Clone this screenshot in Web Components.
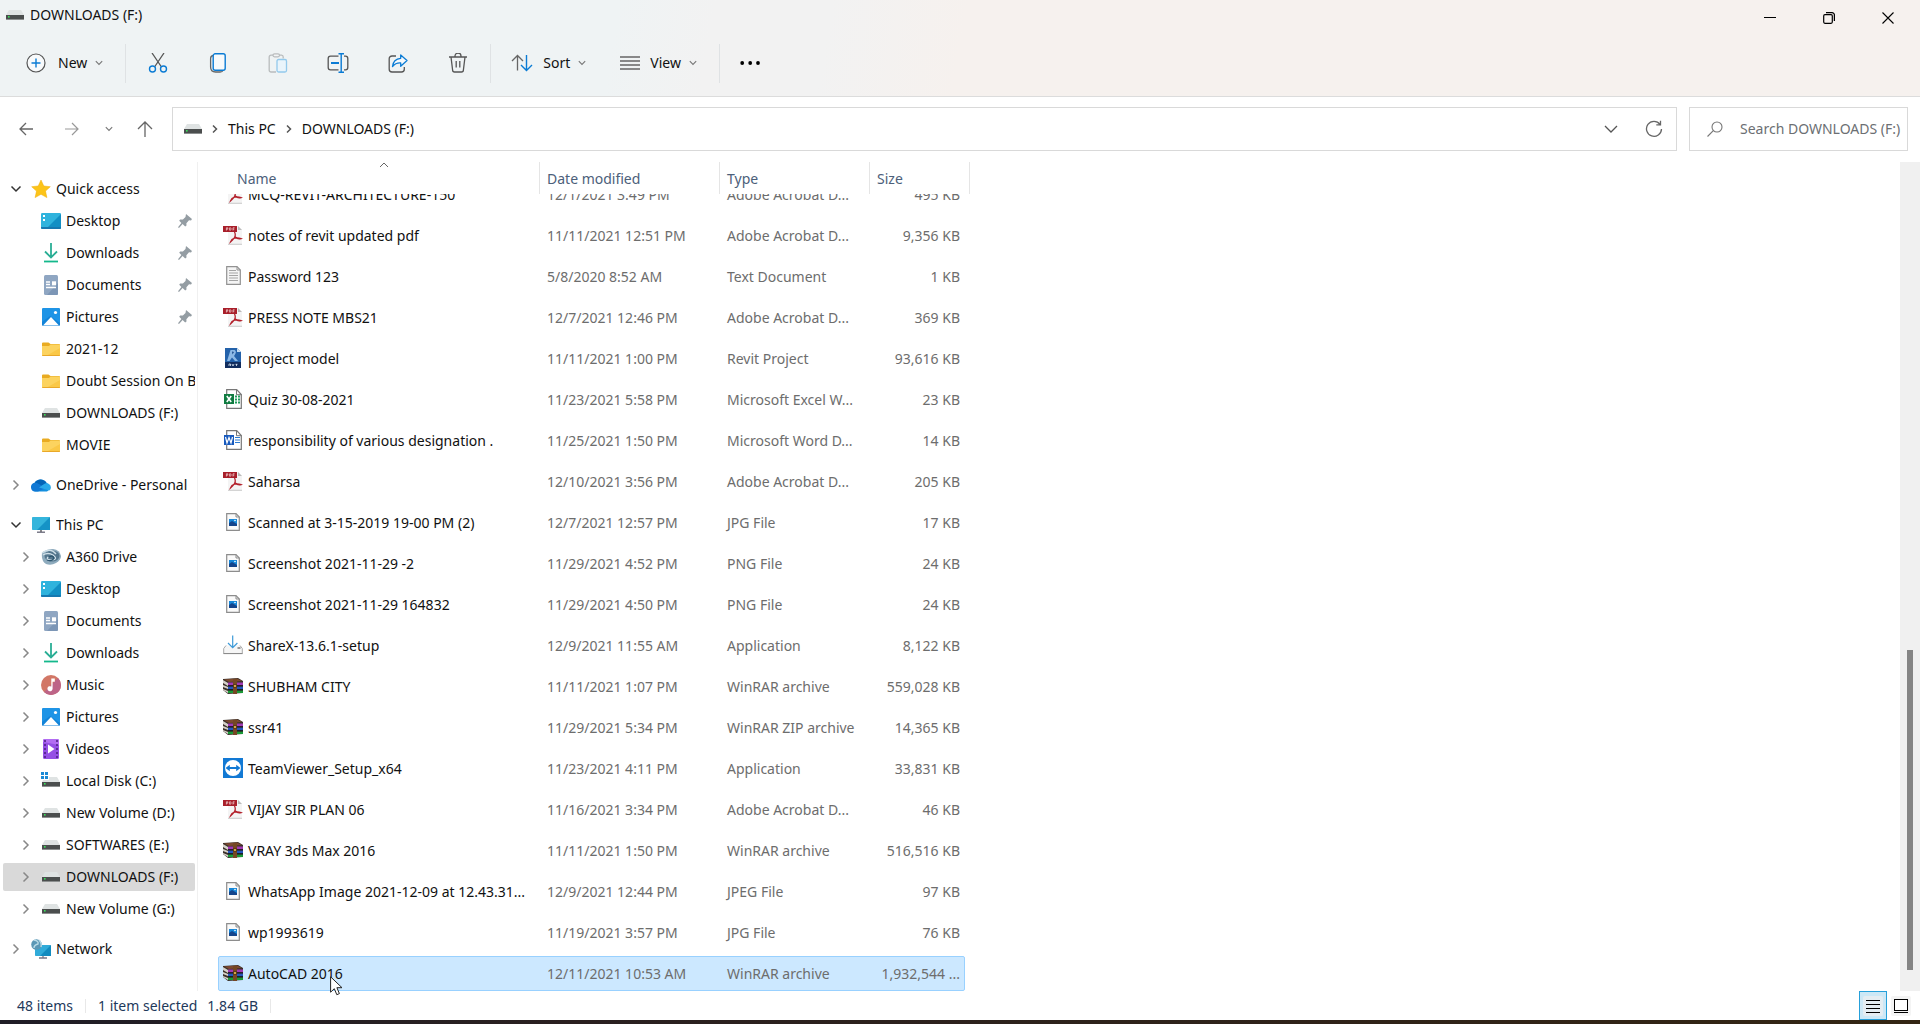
<!DOCTYPE html>
<html lang="en">
<head>
<meta charset="utf-8">
<title>DOWNLOADS (F:)</title>
<style>
html, body { margin: 0; height: 100%; }
body { font: 14px/20px "Noto Sans", "Open Sans", sans-serif; color: #111; background: #fff; overflow: hidden; }
</style>
</head>
<body>
<file-explorer></file-explorer>

<script>
const ICONS = {
  drive: [18, 10, '<path d="M3 0h12l3 5H0z" fill="#dfe3e3"/><rect y="5" width="18" height="5" fill="#4b4e4e"/><rect y="9" width="18" height="1" fill="#8c8f8f"/><rect x="2" y="6" width="1.6" height="1.6" fill="#3be05a"/>'],
  cdrive: [20, 18, '<path d="M0 0h3v3H0zM4 0h3v3H4zM0 4h3v3H0zM4 4h3v3H4z" fill="#1a8ad6"/><path d="M8 5h8l3 5H1l1-2h6z" fill="#dfe3e3"/><rect x="1" y="10" width="18" height="5" fill="#4b4e4e"/><rect x="1" y="14" width="18" height="1" fill="#8c8f8f"/><rect x="3" y="11" width="1.6" height="1.6" fill="#3be05a"/>'],
  add: [20, 20, '<circle cx="10" cy="10" r="9" fill="#f8fafb" stroke="#555" stroke-width="1.2"/><path d="M10 5.500v9M5.500 10h9" stroke="#0a7bd4" stroke-width="1.4"/>'],
  down: [8, 6, '<path d="M.8 1.200 4 4.400l3.200-3.200" fill="none" stroke="#777" stroke-width="1.100"/>'],
  downbig: [14, 8, '<path d="M1 1l6 6 6-6" fill="none" stroke="#555" stroke-width="1.300"/>'],
  cut: [20, 20, '<path d="M4 0l9.500 14M16 0L6.500 14" stroke="#555" stroke-width="1.300" fill="none"/><circle cx="4.500" cy="16" r="3" fill="none" stroke="#0a7bd4" stroke-width="1.400"/><circle cx="15.500" cy="16" r="3" fill="none" stroke="#0a7bd4" stroke-width="1.400"/>'],
  copy: [18, 20, '<path d="M4 2.500C2 3 1.600 4 1.600 5.500V14c0 3.500 1.400 5 5 5h4.500c1.500 0 2.500-.5 2.900-1.600" fill="none" stroke="#666" stroke-width="1.300"/><rect x="4.200" y=".8" width="12" height="16.400" rx="2" fill="#f8fafb" stroke="#0a7bd4" stroke-width="1.400"/>'],
  paste: [20, 20, '<path d="M8 19H3a1.800 1.800 0 0 1-1.800-1.800V4A1.800 1.800 0 0 1 3 2.200h10.500A1.800 1.800 0 0 1 15.200 4v1.500" fill="none" stroke="#b9bcbd" stroke-width="1.300"/><rect x="5" y=".8" width="6.500" height="3" rx="1.500" fill="#f2f4f5" stroke="#b9bcbd" stroke-width="1.200"/><rect x="9" y="6.500" width="9.500" height="12.500" rx="1.500" fill="#e9f4fb" stroke="#93c9ec" stroke-width="1.300"/>'],
  rename: [22, 20, '<path d="M11.500 3.200H3.500A2.300 2.300 0 0 0 1.200 5.500v9a2.300 2.300 0 0 0 2.300 2.300h8M17 3.200h1.500a2.300 2.300 0 0 1 2.300 2.300v9a2.300 2.300 0 0 1-2.300 2.300H17" fill="none" stroke="#555" stroke-width="1.300"/><path d="M4 10h8" stroke="#0a7bd4" stroke-width="2"/><path d="M14.200.700v18.600M11.500.8h5.500M11.500 19.200h5.500" stroke="#0a7bd4" stroke-width="1.400"/>'],
  share: [20, 20, '<path d="M8 3H4a2.800 2.800 0 0 0-2.800 2.800v10.400A2.800 2.800 0 0 0 4 19h9.500a2.800 2.800 0 0 0 2.800-2.800V14" fill="none" stroke="#555" stroke-width="1.300"/><path d="M12.700 2l6.300 5.600-6.300 5.600v-3.300c-3.500-.2-6 .8-8.200 3.600.5-4.800 3.200-7.800 8.200-8.200z" fill="#f5f9fc" stroke="#0a7bd4" stroke-width="1.300" stroke-linejoin="round"/>'],
  trash: [20, 20, '<path d="M1 4h18M7 4V3a3 3 0 0 1 6 0v1M3 4l1.600 13A2 2 0 0 0 6.600 19h6.800a2 2 0 0 0 2-2L17 4M8.200 8v6.500M11.800 8v6.500" fill="none" stroke="#555" stroke-width="1.300"/>'],
  sort: [22, 18, '<path d="M6.500 16.500V2M1 7l5.500-5.500L12 7" fill="none" stroke="#666" stroke-width="1.300"/><path d="M15.500 1v15M10 11l5.500 5.500L21 11" fill="none" stroke="#0a7bd4" stroke-width="1.400"/>'],
  view: [20, 14, '<path d="M0 1h20M0 5h20M0 9h20M0 13h20" stroke="#666" stroke-width="1.400"/>'],
  more: [20, 4, '<circle cx="2.200" cy="2" r="1.900"/><circle cx="10.200" cy="2" r="1.900"/><circle cx="18" cy="2" r="1.900"/>'],
  min: [12, 12, '<path d="M0 5.500h12" stroke="#000"/>'],
  restore: [12, 12, '<rect x=".7" y="2.700" width="8.600" height="8.600" rx="1.200" fill="none" stroke="#000" stroke-width="1.200"/><path d="M3 .7h6a2.400 2.400 0 0 1 2.400 2.400V9" fill="none" stroke="#000" stroke-width="1.300"/>'],
  close: [12, 12, '<path d="M.5.500l11 11M11.500.500l-11 11" stroke="#000" stroke-width="1.100"/>'],
  back: [14, 14, '<path d="M14 7H1M7 1L1 7l6 6" fill="none" stroke="#666" stroke-width="1.300"/>'],
  forward: [14, 14, '<path d="M0 7h13M7 1l6 6-6 6" fill="none" stroke="#999" stroke-width="1.200"/>'],
  up: [16, 16, '<path d="M8 16V1M1 8l7-7 7 7" fill="none" stroke="#666" stroke-width="1.300"/>'],
  crumb: [6, 10, '<path d="M1 1.500L4.500 5 1 8.500" fill="none" stroke="#555" stroke-width="1.500"/>'],
  refresh: [18, 18, '<path d="M15 4.300A7.500 7.500 0 1 0 16.500 9M15.500.8v4h-4.200" fill="none" stroke="#666" stroke-width="1.300"/>'],
  search: [16, 16, '<circle cx="10" cy="6" r="5" fill="none" stroke="#777" stroke-width="1.100"/><path d="M6.300 9.700L.5 15.500" stroke="#777" stroke-width="1.100"/>'],
  open: [12, 8, '<path d="M1.500 1.500L6 6l4.500-4.500" fill="none" stroke="#333" stroke-width="1.500"/>'],
  closed: [8, 12, '<path d="M1.500 1.500L6 6l-4.500 4.500" fill="none" stroke="#888" stroke-width="1.500"/>'],
  caret: [10, 6, '<path d="M1 5l4-4 4 4" fill="none" stroke="#666"/>'],
  pin: [14, 14, '<path d="M8 0l6 5-1 1.500-2-.3-2.600 3 .1 2.300-1.300.9-2.600-2.400L1 14l-1-.7 3.400-4.200L1.200 6.700l.9-1.100 2.800 0L7.500 3z" fill="#949da3"/>'],
  star: [20, 20, '<path d="M10 1l2.800 6 6.500.7-4.800 4.400 1.400 6.500-5.900-3.300-5.900 3.300 1.400-6.500L.7 7.700 7.200 7z" fill="#fcc419" stroke="#f0ad05" stroke-width=".5"/>'],
  desktop: [20, 16, '<rect width="20" height="16" rx="1.200" fill="#2fb3dd"/><path d="M20 1v13.800L18.800 16H5z" fill="#128fc4"/><path d="M2 2h2v2H2zM2 6h2v2H2z" fill="#fff"/><path d="M0 14h20v.8a1.200 1.200 0 0 1-1.200 1.200H1.200A1.200 1.200 0 0 1 0 14.800z" fill="#1678b0"/>'],
  download: [16, 20, '<path d="M8 0v14M2 8.500l6 6 6-6" fill="none" stroke="#2aae95" stroke-width="1.800"/><path d="M1 18.500h14" stroke="#14b88c" stroke-width="1.800"/>'],
  document: [14, 20, '<rect width="14" height="20" rx="1.500" fill="#8fa6c2"/><path d="M14 8v10.500a1.500 1.500 0 0 1-1.500 1.500H3z" fill="#7c96b6"/><path d="M2 7h4M2 9.500h4M2 12.500h10" stroke="#fff" stroke-width="1.300"/><rect x="8" y="6.300" width="4" height="4" fill="#fff"/>'],
  picture: [18, 18, '<rect width="18" height="18" rx="1.500" fill="#1283d8"/><path d="M0 14l8-6 10 7V1.500A1.500 1.500 0 0 0 16.500 0h-15A1.500 1.500 0 0 0 0 1.500z" fill="#1e94e6"/><path d="M1 17.500l8-8.500 8 8.500z" fill="#fff"/><circle cx="13.500" cy="4.500" r="1.600" fill="#fff"/>'],
  folder: [18, 14, '<path d="M0 1.500A1 1 0 0 1 1 .5h5.500L8.500 2H17a1 1 0 0 1 1 1v3H0z" fill="#e9ab22"/><path d="M0 4h7l1.500-1.500H18V13a1 1 0 0 1-1 1H1a1 1 0 0 1-1-1z" fill="#fcd35f"/><path d="M18 6v7a1 1 0 0 1-1 1H4z" fill="#fac847"/><path d="M0 13h18v0a1 1 0 0 1-1 1H1a1 1 0 0 1-1-1z" fill="#e9a829"/>'],
  cloud: [20, 14, '<path d="M4.500 13.500A4.400 4.400 0 0 1 3.500 5 7 7 0 0 1 15.600 5 4.600 4.600 0 0 1 16 13.500z" fill="#1490df"/><path d="M3.500 5A7 7 0 0 1 15.600 5L8 9.500z" fill="#0364b8"/><path d="M0 9.500A4.400 4.400 0 0 1 6 5l9 5-8 3.500H4.500A4.400 4.400 0 0 1 0 9.500z" fill="#0f78d4"/><path d="M8 9.500L14 5.600a4.200 4.200 0 0 1 5.900 3.900 4 4 0 0 1-1.500 3z" fill="#28a8ea"/>'],
  pc: [18, 16, '<rect width="18" height="13" rx=".8" fill="#35b5dc"/><path d="M18 0v13H5z" fill="#1593c6"/><path d="M8 13h2v2H8z" fill="#888"/><path d="M5 15.200h8" stroke="#667" stroke-width="1.300"/>'],
  a360: [20, 16, '<path d="M1 4Q5 0 12 0q7 1 8 7 0 4-5 7-5 3-10 1Q0 12 1 4z" fill="#8eabbd"/><ellipse cx="11" cy="7" rx="7.500" ry="5.500" fill="#54768d"/><path d="M1 4q8-6 14 1M2 6q5-3 10 0 6 5-3 5-4 0-2-3" fill="none" stroke="#cfdfe8" stroke-width="1.400"/><path d="M8 8q4-2 5 1-2 4-7 2" fill="none" stroke="#2d556e" stroke-width="1.300"/>'],
  music: [20, 20, '<circle cx="10" cy="10" r="10" fill="#d27766"/><path d="M3 17A10 10 0 0 0 20 10 10 10 0 0 0 17 3z" fill="#bd6487"/><path d="M10.300 3.500h3.500v3.300h-2.200v7a2.600 2.600 0 1 1-1.300-2.300z" fill="#fff"/>'],
  video: [16, 20, '<rect width="16" height="20" rx="1.500" fill="#9550e5"/><path d="M0 1.500A1.500 1.500 0 0 1 1.500 0h13A1.500 1.500 0 0 1 16 1.500V6L0 3z" fill="#b26df2"/><path d="M2 1v18M14 1v18" stroke="#4a1d80" stroke-width="1.500" stroke-dasharray="2 2"/><path d="M5 5.500v9l6.500-4.500z" fill="#fff"/>'],
  network: [20, 20, '<rect x="4" y="6" width="16" height="11" rx=".8" fill="#30abd9"/><path d="M20 6v11H9z" fill="#128bbf"/><path d="M8 19h8M12 17v2" stroke="#778" stroke-width="1.300"/><circle cx="5.500" cy="5.500" r="5.300" fill="#5b97b5"/><path d="M3 1q5 1 4 4-4 1-4 4M8 1q3 3 2 7" fill="none" stroke="#b9dae6" stroke-width="1.400"/>'],
  pdf: [20, 20, '<path d="M5 1h10l4 4v14H5z" fill="#f4f4f4"/><path d="M15 1v4h4z" fill="#bbb"/><path d="M5 19.300h14" stroke="#bbb" stroke-width=".8"/><rect y="1" width="14" height="6" fill="#a81f2a"/><path d="M3.400 5.500V2.800h1.400v1.400H3.400M6.600 2.800h1q1.200 1.100 0 2.400h-1zM10 5.500V2.800h1.600M10 4.200h1.300" fill="none" stroke="#f5dcdc" stroke-width=".7"/><path d="M11.500 7q1.500 3 0 5.500T7.500 17q1-2.800 4-3.800t6.500.4q-4 1-6.300-2.600" fill="none" stroke="#b3202b" stroke-width="1.300"/>'],
  text: [15, 19, '<path d="M.7.700H11L14.300 4v14.300H.700z" fill="#f5f5f5" stroke="#929292" stroke-width="1.200"/><path d="M11 .7V4h3.300" fill="none" stroke="#929292"/><path d="M3 4.500h7M3 7h9M3 9.500h9M3 12h9M3 14.500h9" stroke="#a5a5a5" stroke-width="1.100"/>'],
  revit: [16, 20, '<path d="M0 0h12l4 4v16H0z" fill="#2462aa"/><path d="M0 14h16v6H0z" fill="#122d5e"/><path d="M12 0v4h4z" fill="#c6dcf0"/><path d="M2 13L5.500 2h4q2.500 1 .5 4.500L9 8l4 5h-3L7 9.500 4.500 13z" fill="#8cb9e6"/><path d="M7 3.500l2 .5-1.500 2.500z" fill="#1c4c8c"/><path d="M4 18v-2h1.500v2M7 16l1 2 1-2M10.500 16.300h2M11.500 16v2" fill="none" stroke="#dce8f5" stroke-width=".8"/>'],
  excel: [18, 20, '<path d="M2.700.700h10L17.300 5.500v13.800H2.700z" fill="#fff" stroke="#777" stroke-width="1.200"/><path d="M12.500.700v5h5" fill="none" stroke="#777"/><path d="M11 7.500h2M14 7.500h2M11 10.500h2M14 10.500h2M11 13.500h2M14 13.500h2" stroke="#1f9d5b" stroke-width="2"/><rect y="5" width="10" height="10" fill="#107c41"/><path d="M2.800 7l4.400 6M7.200 7l-4.400 6" stroke="#fff" stroke-width="1.600"/>'],
  word: [18, 20, '<path d="M2.700.700h10L17.300 5.500v13.800H2.700z" fill="#fff" stroke="#777" stroke-width="1.200"/><path d="M12.500.700v5h5" fill="none" stroke="#777"/><path d="M11 7.500h5M11 10h5M11 12.500h5" stroke="#2b7cd3" stroke-width="1.200"/><rect y="5" width="10" height="10" fill="#185abd"/><path d="M1.500 7l1.500 6 2-5.500L7 13l1.500-6" fill="none" stroke="#fff" stroke-width="1.200"/>'],
  image: [14, 18, '<path d="M.7.700H10L13.300 4v13.300H.700z" fill="#fafafa" stroke="#8d8d8d" stroke-width="1.200"/><path d="M10 .7V4h3.300" fill="none" stroke="#8d8d8d"/><rect x="3" y="6" width="8" height="7" fill="#1687d8"/><path d="M3 13v-3l3-2 5 3v2z" fill="#14458c"/><circle cx="9" cy="7.500" r=".8" fill="#fff"/>'],
  setup: [20, 20, '<path d="M3 10.500l-2.300 3v5h18.600v-5l-2.300-3" fill="#f6f6f6" stroke="#a9a9a9" stroke-width="1"/><path d="M.5 18.600h19" stroke="#888"/><path d="M14.500 13h3" stroke="#777" stroke-width="1.500"/><path d="M9.700.500v12M5 8l4.700 4.700L14.400 8" fill="none" stroke="#3d9ad8" stroke-width="1.200"/>'],
  rar: [20, 16, '<path d="M0 1l15-1 5 3v12L5 16 0 12z" fill="#3a3029"/><path d="M0 2l5 3h0v3L0 5zM0 7l5 2v2L0 9zM0 11l5 2v2L0 12z" fill="#d5d0c8"/><path d="M1 1.500l13-1 5 2.500L6 4z" fill="#7d4a30"/><path d="M5 4.500h15v3H5z" fill="#a23ab5"/><path d="M5 8.500h15v3H5z" fill="#2455bd"/><path d="M5 12.500h15v2.500H5z" fill="#199a36"/><path d="M5 7.800h15M5 11.800h15" stroke="#111"/><path d="M10 1h4v15h-4z" fill="#754724"/><path d="M10.500 6.500h3v3h-3z" fill="#d6a648" stroke="#472a13" stroke-width=".8"/>'],
  teamviewer: [20, 20, '<rect width="20" height="20" fill="#1279d4"/><circle cx="10" cy="10" r="8" fill="#fff"/><path d="M2.500 10l4.300-3.300v2.300h6.400V6.700l4.300 3.300-4.300 3.300V11H6.800v2.300z" fill="#1279d4"/>'],
  details: [20, 20, '<rect width="20" height="20" rx="2" fill="#e4edf2"/><path d="M3 4.500h14M3 8.500h14M3 12.500h14M3 16.500h14" stroke="#000"/>'],
  thumbs: [20, 20, '<rect width="20" height="20" rx="2" fill="#f4f4f4"/><rect x="3.500" y="3.500" width="13" height="11" fill="#fff" stroke="#000"/><path d="M3 16.500h14" stroke="#000"/>'],
  pointer: [13, 20, '<path d="M.6.800v15.400l3.700-3.500 2.500 6 2.600-1.100-2.500-5.900H12z" fill="#fff" stroke="#222" stroke-width="1"/>']
};

class BaseElement extends HTMLElement {
  connectedCallback() {
    if (this.shadowRoot) return;
    const root = this.attachShadow({ mode: 'open' });
    root.innerHTML = this.render();
    this.ready?.();
  }
}

customElements.define('ui-icon', class extends BaseElement {
  render() {
    const [w, h, body] = ICONS[this.getAttribute('name')];
    return `<style>:host{display:inline-flex;flex:none;pointer-events:none}svg{display:block}</style>
      <svg width="${w}" height="${h}" viewBox="0 0 ${w} ${h}" aria-hidden="true">${body}</svg>`;
  }
});

const RESET = `button{font:inherit;color:inherit;background:none;border:0;padding:0;margin:0;display:flex;align-items:center;justify-content:center}`;
const ib = (name, label) => `<button aria-label="${label}"><ui-icon name="${name}"></ui-icon></button>`;

customElements.define('title-bar', class extends BaseElement {
  render() {
    return `<style>${RESET}
      :host{display:flex;align-items:center;height:36px;padding-left:6px}
      .title{display:flex;align-items:center;gap:6px;height:30px;align-self:flex-start}
      .controls{display:flex;margin-left:auto;height:36px;padding-right:3px}
      .controls button{width:59px}
    </style>
    <div class="title"><ui-icon name="drive"></ui-icon><slot></slot></div>
    <div class="controls">${ib('min', 'Minimize')}${ib('restore', 'Restore')}${ib('close', 'Close')}</div>`;
  }
});

customElements.define('command-bar', class extends BaseElement {
  render() {
    return `<style>${RESET}
      :host{display:flex;align-items:center;height:54px;padding:0 0 6px 26px}
      .labelled{height:40px}
      .labelled span{margin:0 8px 0 12px}
      .sort span,.view span{margin-left:10px}
      .group{display:flex;padding:0 2px}
      .group button{width:60px;height:40px}
      i{width:1px;height:39px;background:#dfe2e4}
      .new{padding-right:22px}
      .sort{padding:0 34px 0 20px}
      .view{padding-right:22px}
      .more{padding:0 20px;height:40px}
    </style>
    <button class="labelled new"><ui-icon name="add"></ui-icon><span>New</span><ui-icon name="down"></ui-icon></button>
    <i></i>
    <div class="group">${ib('cut', 'Cut')}${ib('copy', 'Copy')}${ib('paste', 'Paste')}${ib('rename', 'Rename')}${ib('share', 'Share')}${ib('trash', 'Delete')}</div>
    <i></i>
    <button class="labelled sort"><ui-icon name="sort"></ui-icon><span>Sort</span><ui-icon name="down"></ui-icon></button>
    <button class="labelled view"><ui-icon name="view"></ui-icon><span>View</span><ui-icon name="down"></ui-icon></button>
    <i></i>
    <button class="more" aria-label="See more"><ui-icon name="more"></ui-icon></button>`;
  }
});

customElements.define('address-bar', class extends BaseElement {
  render() {
    return `<style>${RESET}
      :host{display:flex;padding:10px 12px 11px 3px}
      .nav{display:flex;width:169px}
      .nav button{width:46px}
      .nav .recent{width:28px}
      .nav .up{width:44px}
      .path{flex:1;display:flex;align-items:center;height:42px;border:1px solid #d9d9d9;padding-left:11px}
      .path .crumb{margin:0 10px}
      .end{display:flex;margin-left:auto;align-self:stretch}
      .end button{width:43px}
      .end{padding-right:1px}
      label{display:flex;align-items:center;width:200px;border:1px solid #d9d9d9;margin-left:12px;padding-left:17px;gap:17px}
      input{flex:1;min-width:0;border:0;outline:0;padding:0;font:inherit;color:#333;background:none}
      input::placeholder{color:#6c6f73;opacity:1}
    </style>
    <div class="nav">${ib('back', 'Back')}${ib('forward', 'Forward')}
      <button class="recent" aria-label="Recent locations"><ui-icon name="down"></ui-icon></button>
      <button class="up" aria-label="Up"><ui-icon name="up"></ui-icon></button></div>
    <div class="path"><ui-icon name="drive"></ui-icon><ui-icon class="crumb" name="crumb"></ui-icon>
      <button>This PC</button><ui-icon class="crumb" name="crumb"></ui-icon><button>DOWNLOADS (F:)</button>
      <div class="end">${ib('downbig', 'Previous locations')}${ib('refresh', 'Refresh')}</div></div>
    <label><ui-icon name="search"></ui-icon><input type="text" aria-label="Search" placeholder="Search DOWNLOADS (F:)"></label>`;
  }
});

customElements.define('nav-item', class extends BaseElement {
  render() {
    const state = this.getAttribute('state');
    return `<style>${RESET}
      :host{display:flex;height:28px;margin:0 2px 4px 3px;align-items:center}
      :host([gap]){margin-top:12px}
      :host([child]){padding-left:11px}
      :host([selected]){background:#d9d9d9;border-radius:2px}
      .toggle{width:26px;height:28px;flex:none}
      :host([child]) .toggle{width:24px}
      a{display:flex;align-items:center;flex:1;min-width:0;color:inherit;text-decoration:none}
      .icon{width:24px;display:flex;justify-content:center;flex:none;margin-right:3px}
      :host([child]) .icon{width:26px;margin-right:2px}
      .label{flex:1;min-width:0;white-space:nowrap;overflow:hidden}
      .pin{margin-right:3px}
    </style>
    ${state ? `<button class="toggle" aria-label="Toggle"><ui-icon name="${state}"></ui-icon></button>` : '<span class="toggle"></span>'}
    <a href="#"><span class="icon"><ui-icon name="${this.getAttribute('icon')}"></ui-icon></span>
    <span class="label"><slot></slot></span>${this.hasAttribute('pinned') ? '<ui-icon class="pin" name="pin"></ui-icon>' : ''}</a>`;
  }
});

customElements.define('nav-pane', class extends BaseElement {
  render() {
    const items = [
      ['Quick access', 'star', 'state="open"'],
      ['Desktop', 'desktop', 'child pinned'], ['Downloads', 'download', 'child pinned'],
      ['Documents', 'document', 'child pinned'], ['Pictures', 'picture', 'child pinned'],
      ['2021-12', 'folder', 'child'], ['Doubt Session On B', 'folder', 'child'],
      ['DOWNLOADS (F:)', 'drive', 'child'], ['MOVIE', 'folder', 'child'],
      ['OneDrive - Personal', 'cloud', 'gap state="closed"'],
      ['This PC', 'pc', 'gap state="open"'],
      ['A360 Drive', 'a360', 'child state="closed"'], ['Desktop', 'desktop', 'child state="closed"'],
      ['Documents', 'document', 'child state="closed"'], ['Downloads', 'download', 'child state="closed"'],
      ['Music', 'music', 'child state="closed"'], ['Pictures', 'picture', 'child state="closed"'],
      ['Videos', 'video', 'child state="closed"'], ['Local Disk (C:)', 'cdrive', 'child state="closed"'],
      ['New Volume (D:)', 'drive', 'child state="closed"'], ['SOFTWARES (E:)', 'drive', 'child state="closed"'],
      ['DOWNLOADS (F:)', 'drive', 'child selected state="closed"'], ['New Volume (G:)', 'drive', 'child state="closed"'],
      ['Network', 'network', 'gap state="closed"']
    ];
    return `<style>:host{display:block;width:197px;flex:none;border-right:1px solid #f0f0f0;box-sizing:content-box}nav{padding-top:13px}</style>
      <nav aria-label="Folders">${items.map(([t, i, a]) => `<nav-item icon="${i}" ${a}>${t}</nav-item>`).join('')}</nav>`;
  }
});

customElements.define('file-list', class extends BaseElement {
  render() {
    const P = 'Adobe Acrobat D...', W = 'WinRAR archive';
    const files = [
      ['pdf', 'MCQ-REVIT-ARCHITECTURE-150', '12/1/2021 3:49 PM', P, '495 KB'],
      ['pdf', 'notes of revit updated pdf', '11/11/2021 12:51 PM', P, '9,356 KB'],
      ['text', 'Password 123', '5/8/2020 8:52 AM', 'Text Document', '1 KB'],
      ['pdf', 'PRESS NOTE MBS21', '12/7/2021 12:46 PM', P, '369 KB'],
      ['revit', 'project model', '11/11/2021 1:00 PM', 'Revit Project', '93,616 KB'],
      ['excel', 'Quiz 30-08-2021', '11/23/2021 5:58 PM', 'Microsoft Excel W...', '23 KB'],
      ['word', 'responsibility of various designation .', '11/25/2021 1:50 PM', 'Microsoft Word D...', '14 KB'],
      ['pdf', 'Saharsa', '12/10/2021 3:56 PM', P, '205 KB'],
      ['image', 'Scanned at 3-15-2019 19-00 PM (2)', '12/7/2021 12:57 PM', 'JPG File', '17 KB'],
      ['image', 'Screenshot 2021-11-29 -2', '11/29/2021 4:52 PM', 'PNG File', '24 KB'],
      ['image', 'Screenshot 2021-11-29 164832', '11/29/2021 4:50 PM', 'PNG File', '24 KB'],
      ['setup', 'ShareX-13.6.1-setup', '12/9/2021 11:55 AM', 'Application', '8,122 KB'],
      ['rar', 'SHUBHAM CITY', '11/11/2021 1:07 PM', W, '559,028 KB'],
      ['rar', 'ssr41', '11/29/2021 5:34 PM', 'WinRAR ZIP archive', '14,365 KB'],
      ['teamviewer', 'TeamViewer_Setup_x64', '11/23/2021 4:11 PM', 'Application', '33,831 KB'],
      ['pdf', 'VIJAY SIR PLAN 06', '11/16/2021 3:34 PM', P, '46 KB'],
      ['rar', 'VRAY 3ds Max 2016', '11/11/2021 1:50 PM', W, '516,516 KB'],
      ['image', 'WhatsApp Image 2021-12-09 at 12.43.31...', '12/9/2021 12:44 PM', 'JPEG File', '97 KB'],
      ['image', 'wp1993619', '11/19/2021 3:57 PM', 'JPG File', '76 KB'],
      ['rar', 'AutoCAD 2016', '12/11/2021 10:53 AM', W, '1,932,544 ...']
    ];
    return `<style>${RESET}
      :host{display:block;flex:1;min-width:0;overflow:auto;scrollbar-width:none;padding-left:20px}
      table,thead,tbody{display:block}
      tr{display:grid;grid-template-columns:322px 180px 150px 100px;width:max-content}
      thead{position:sticky;top:0;z-index:1;background:#fff;height:32px}
      th{font-weight:400;text-align:left;color:#4c607a;height:32px;line-height:32px;padding-left:7px;border-right:1px solid #e5e5e5;box-sizing:border-box;position:relative}
      th:first-child{padding-left:19px}
      .caret{position:absolute;left:50%;top:0}
      tbody tr{height:33px;margin-top:6px;border:1px solid transparent;border-radius:2px;grid-template-columns:321px 180px 150px 94px;align-items:center}
      tbody tr.selected{background:#cce8ff;border-color:#99d1ff}
      td{padding:0 0 0 7px;color:#6d6d6d;white-space:nowrap}
      td:first-child{display:flex;align-items:center;gap:5px;padding-left:4px;color:#111}
      .icon{width:20px;display:flex;justify-content:center;padding-bottom:2px}
      td:last-child{text-align:right;padding:0 4px 0 0}
    </style>
    <table>
      <thead><tr><th scope="col">Name<ui-icon class="caret" name="caret"></ui-icon></th><th scope="col">Date modified</th><th scope="col">Type</th><th scope="col">Size</th></tr></thead>
      <tbody>${files.map(([i, n, d, t, s], k) => {
        const sel = k === files.length - 1;
        return `<tr${sel ? ' class="selected" aria-selected="true"' : ''}><td><span class="icon"><ui-icon name="${i}"></ui-icon></span><span>${n}</span></td><td>${d}</td><td>${t}</td><td>${s}</td></tr>`;
      }).join('')}</tbody>
    </table>`;
  }
  scrollToEnd() { this.scrollTop = this.scrollHeight; }
});

customElements.define('scroll-track', class extends BaseElement {
  render() {
    return `<style>:host{display:flex;flex-direction:column;align-items:center;width:20px;flex:none;background:#f0f0f0;padding-bottom:21px;box-sizing:border-box}
      .space{flex:61}.thumb{flex:40;width:6px;background:#858585}</style><div class="space"></div><div class="thumb"></div>`;
  }
});

customElements.define('status-bar', class extends BaseElement {
  render() {
    return `<style>${RESET}
      :host{display:flex;align-items:center;height:29px;padding:0 5px 0 17px;color:#1e395b}
      i{width:1px;height:14px;background:#e8e8e8;margin:0 12px}
      .size{margin-left:10px}
      .modes{display:flex;margin-left:auto}
      .modes button{width:28px;height:29px;box-sizing:border-box}
      .modes .on{background:#cce8f6;border:1px solid #26a0da}
    </style>
    <span>48 items</span><i></i><span>1 item selected</span><span class="size">1.84 GB</span><i></i>
    <div class="modes"><button class="on" aria-label="Details"><ui-icon name="details"></ui-icon></button><button aria-label="Large thumbnails"><ui-icon name="thumbs"></ui-icon></button></div>`;
  }
});

customElements.define('file-explorer', class extends BaseElement {
  render() {
    return `<style>
      :host{display:flex;flex-direction:column;height:100vh}
      header{background:linear-gradient(100deg,#eff3f4 0,#eff3f4 32%,#f2f2f2 37%,#f2f2f2 43%,#f6f1ee 50%);border-bottom:1px solid #dcdcdc}
      main{display:flex;flex:1;min-height:0;position:relative}
      .pointer{position:absolute;left:330px;bottom:-5px;z-index:2}
      footer{height:4px;background:linear-gradient(90deg,#1f1d26,#2a2020 30%,#332513)}
    </style>
    <header><title-bar>DOWNLOADS (F:)</title-bar><command-bar></command-bar></header>
    <address-bar></address-bar>
    <main><nav-pane></nav-pane><file-list></file-list><scroll-track></scroll-track><ui-icon class="pointer" name="pointer"></ui-icon></main>
    <status-bar></status-bar>
    <footer></footer>`;
  }
  ready() {
    const list = this.shadowRoot.querySelector('file-list');
    new ResizeObserver(() => list.scrollToEnd()).observe(list);
    list.scrollToEnd();
  }
});
</script>
</body>
</html>
